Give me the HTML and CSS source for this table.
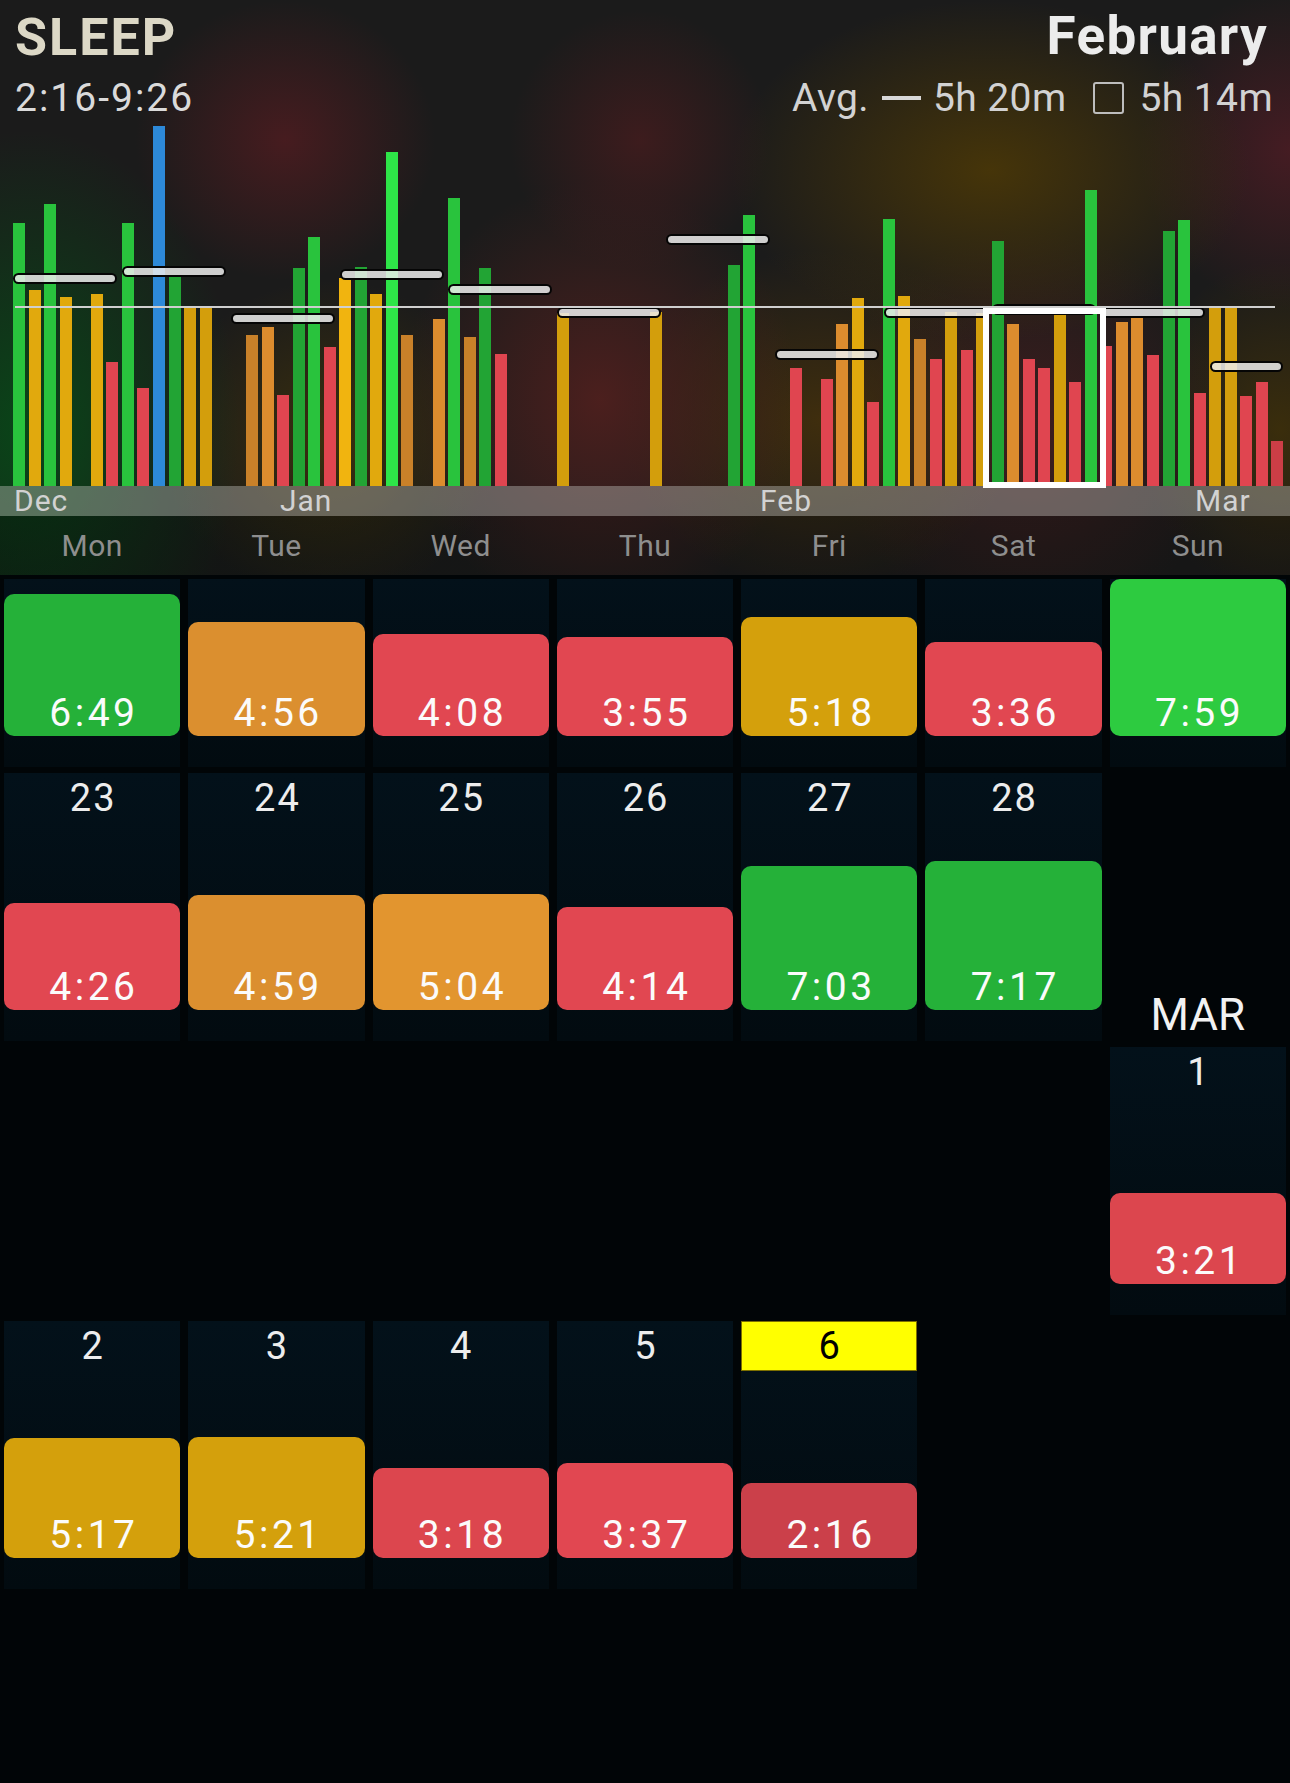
FILE: index.html
```html
<!DOCTYPE html>
<html lang="en">
<head>
<meta charset="utf-8">
<title>Sleep</title>
<link rel="stylesheet" href="styles.css">
</head>
<body>
<header class="top">
  <div class="titles">
    <div class="col-left">
      <div class="title">SLEEP</div>
      <div class="range">2:16-9:26</div>
    </div>
    <div class="col-right">
      <div class="month">February</div>
      <div class="avg"><span>Avg.</span><span class="dash"></span><span>5h 20m</span><span class="box"></span><span>5h 14m</span></div>
    </div>
  </div>

  <div class="chart">
    <i class="s"><b class="bar g" style="height:263px"></b></i>
    <i class="s"><b class="bar y" style="height:196px"></b></i>
    <i class="s"><b class="bar g" style="height:282px"></b></i>
    <i class="s"><b class="bar y" style="height:189px"></b></i>
    <i class="s"></i>
    <i class="s"><b class="bar y" style="height:192px"></b></i>
    <i class="s"><b class="bar r" style="height:124px"></b></i>
    <i class="s"><b class="bar g" style="height:263px"></b></i>
    <i class="s"><b class="bar r" style="height:98px"></b></i>
    <i class="s"><b class="bar bl" style="height:360px"></b></i>
    <i class="s"><b class="bar gd" style="height:209px"></b></i>
    <i class="s"><b class="bar yd" style="height:180px"></b></i>
    <i class="s"><b class="bar yd" style="height:180px"></b></i>
    <i class="s"></i>
    <i class="s"></i>
    <i class="s"><b class="bar od" style="height:151px"></b></i>
    <i class="s"><b class="bar o" style="height:159px"></b></i>
    <i class="s"><b class="bar r" style="height:91px"></b></i>
    <i class="s"><b class="bar gd" style="height:218px"></b></i>
    <i class="s"><b class="bar g" style="height:249px"></b></i>
    <i class="s"><b class="bar r" style="height:139px"></b></i>
    <i class="s"><b class="bar yb" style="height:208px"></b></i>
    <i class="s"><b class="bar gd" style="height:219px"></b></i>
    <i class="s"><b class="bar y" style="height:192px"></b></i>
    <i class="s"><b class="bar gb" style="height:334px"></b></i>
    <i class="s"><b class="bar od" style="height:151px"></b></i>
    <i class="s"></i>
    <i class="s"><b class="bar o" style="height:167px"></b></i>
    <i class="s"><b class="bar g" style="height:288px"></b></i>
    <i class="s"><b class="bar od" style="height:149px"></b></i>
    <i class="s"><b class="bar gd" style="height:218px"></b></i>
    <i class="s"><b class="bar r" style="height:132px"></b></i>
    <i class="s"></i>
    <i class="s"></i>
    <i class="s"></i>
    <i class="s"><b class="bar yd" style="height:173px"></b></i>
    <i class="s"></i>
    <i class="s"></i>
    <i class="s"></i>
    <i class="s"></i>
    <i class="s"></i>
    <i class="s"><b class="bar yd" style="height:174px"></b></i>
    <i class="s"></i>
    <i class="s"></i>
    <i class="s"></i>
    <i class="s"></i>
    <i class="s"><b class="bar gd" style="height:221px"></b></i>
    <i class="s"><b class="bar g" style="height:271px"></b></i>
    <i class="s"></i>
    <i class="s"></i>
    <i class="s"><b class="bar r" style="height:118px"></b></i>
    <i class="s"></i>
    <i class="s"><b class="bar r" style="height:107px"></b></i>
    <i class="s"><b class="bar o" style="height:162px"></b></i>
    <i class="s"><b class="bar y" style="height:188px"></b></i>
    <i class="s"><b class="bar r" style="height:84px"></b></i>
    <i class="s"><b class="bar g" style="height:267px"></b></i>
    <i class="s"><b class="bar y" style="height:190px"></b></i>
    <i class="s"><b class="bar od" style="height:147px"></b></i>
    <i class="s"><b class="bar r" style="height:127px"></b></i>
    <i class="s"><b class="bar yd" style="height:174px"></b></i>
    <i class="s"><b class="bar r" style="height:136px"></b></i>
    <i class="s"><b class="bar yd" style="height:173px"></b></i>
    <i class="s"><b class="bar gd" style="height:245px"></b></i>
    <i class="s"><b class="bar o" style="height:162px"></b></i>
    <i class="s"><b class="bar r" style="height:127px"></b></i>
    <i class="s"><b class="bar r" style="height:118px"></b></i>
    <i class="s"><b class="bar yd" style="height:174px"></b></i>
    <i class="s"><b class="bar r" style="height:104px"></b></i>
    <i class="s"><b class="bar g" style="height:296px"></b></i>
    <i class="s"><b class="bar r" style="height:140px"></b></i>
    <i class="s"><b class="bar o" style="height:164px"></b></i>
    <i class="s"><b class="bar o" style="height:168px"></b></i>
    <i class="s"><b class="bar r" style="height:131px"></b></i>
    <i class="s"><b class="bar gd" style="height:255px"></b></i>
    <i class="s"><b class="bar g" style="height:266px"></b></i>
    <i class="s"><b class="bar r" style="height:93px"></b></i>
    <i class="s"><b class="bar yd" style="height:178px"></b></i>
    <i class="s"><b class="bar yd" style="height:178px"></b></i>
    <i class="s"><b class="bar r" style="height:90px"></b></i>
    <i class="s"><b class="bar r" style="height:104px"></b></i>
    <i class="s"><b class="bar rd" style="height:45px"></b></i>

    <span class="pill" style="left:13px;top:152.5px"></span>
    <span class="pill" style="left:122px;top:145.5px"></span>
    <span class="pill" style="left:231px;top:192.5px"></span>
    <span class="pill" style="left:340px;top:148.5px"></span>
    <span class="pill" style="left:448px;top:163.5px"></span>
    <span class="pill" style="left:557px;top:186.5px"></span>
    <span class="pill" style="left:666px;top:113.5px"></span>
    <span class="pill" style="left:775px;top:228.5px"></span>
    <span class="pill" style="left:884px;top:186.5px"></span>
    <span class="pill" style="left:992px;top:183.5px"></span>
    <span class="pill" style="left:1101px;top:186.5px"></span>
    <span class="pill" style="left:1210px;top:240.5px;width:73px"></span>
    <span class="avg-line"></span>
    <span class="selected"></span>
  </div>

  <div class="months">
    <span class="mlabel" style="left:14px">Dec</span>
    <span class="mlabel" style="left:280px">Jan</span>
    <span class="mlabel" style="left:760px">Feb</span>
    <span class="mlabel" style="left:1195px">Mar</span>
  </div>

  <div class="weekdays">
    <span>Mon</span><span>Tue</span><span>Wed</span><span>Thu</span><span>Fri</span><span>Sat</span><span>Sun</span>
  </div>
</header>

<main class="cal">
  <!-- row 1 (scrolled under header) -->
  <div class="cell"><div class="blk cg" style="height:142px">6:49</div></div>
  <div class="cell"><div class="blk co" style="height:114px">4:56</div></div>
  <div class="cell"><div class="blk cr" style="height:102px">4:08</div></div>
  <div class="cell"><div class="blk cr" style="height:99px">3:55</div></div>
  <div class="cell"><div class="blk cy" style="height:119px">5:18</div></div>
  <div class="cell"><div class="blk cr" style="height:94px">3:36</div></div>
  <div class="cell"><div class="blk cgb" style="height:157px">7:59</div></div>

  <!-- row 2 -->
  <div class="cell"><div class="date">23</div><div class="blk cr" style="height:107px">4:26</div></div>
  <div class="cell"><div class="date">24</div><div class="blk co" style="height:115px">4:59</div></div>
  <div class="cell"><div class="date">25</div><div class="blk co2" style="height:116px">5:04</div></div>
  <div class="cell"><div class="date">26</div><div class="blk cr" style="height:103px">4:14</div></div>
  <div class="cell"><div class="date">27</div><div class="blk cg" style="height:144px">7:03</div></div>
  <div class="cell"><div class="date">28</div><div class="blk cg" style="height:149px">7:17</div></div>
  <div class="slot mar-slot"><div class="mar">MAR</div></div>

  <!-- row 3 -->
  <div class="slot"></div>
  <div class="slot"></div>
  <div class="slot"></div>
  <div class="slot"></div>
  <div class="slot"></div>
  <div class="slot"></div>
  <div class="cell"><div class="date">1</div><div class="blk cr2" style="height:91px">3:21</div></div>

  <!-- row 4 -->
  <div class="cell"><div class="date">2</div><div class="blk cy" style="height:120px">5:17</div></div>
  <div class="cell"><div class="date">3</div><div class="blk cy" style="height:121px">5:21</div></div>
  <div class="cell"><div class="date">4</div><div class="blk cr2" style="height:90px">3:18</div></div>
  <div class="cell"><div class="date">5</div><div class="blk cr" style="height:95px">3:37</div></div>
  <div class="cell"><div class="date today">6</div><div class="blk crd" style="height:75px">2:16</div></div>
  <div class="slot"></div>
  <div class="slot"></div>
</main>
</body>
</html>
```

FILE: styles.css
```css
* { box-sizing: border-box; }

html, body {
  margin: 0;
  padding: 0;
}

body {
  width: 1290px;
  height: 1783px;
  overflow: hidden;
  background: #010507;
  font-family: Roboto, "Liberation Sans", Arial, sans-serif;
  color: #e8e8e8;
}

/* ---------- header / chart ---------- */
.top {
  height: 575px;
  background:
    radial-gradient(ellipse 150px 140px at 285px 140px, rgba(78, 28, 32, 0.85), rgba(78, 28, 32, 0) 100%),
    radial-gradient(ellipse 130px 130px at 640px 140px, rgba(72, 28, 30, 0.75), rgba(72, 28, 30, 0) 100%),
    radial-gradient(ellipse 260px 170px at 990px 170px, rgba(72, 54, 8, 0.95), rgba(72, 54, 8, 0) 100%),
    radial-gradient(ellipse 150px 160px at 1290px 150px, rgba(76, 28, 36, 0.85), rgba(76, 28, 36, 0) 100%),
    radial-gradient(ellipse 210px 300px at 30px 430px, rgba(8, 72, 24, 0.95), rgba(8, 72, 24, 0) 100%),
    radial-gradient(ellipse 170px 160px at 330px 440px, rgba(66, 52, 10, 0.8), rgba(66, 52, 10, 0) 100%),
    radial-gradient(ellipse 200px 220px at 600px 400px, rgba(84, 32, 30, 0.85), rgba(84, 32, 30, 0) 100%),
    radial-gradient(ellipse 200px 170px at 820px 420px, rgba(72, 50, 10, 0.8), rgba(72, 50, 10, 0) 100%),
    radial-gradient(ellipse 200px 200px at 1030px 430px, rgba(70, 30, 30, 0.8), rgba(70, 30, 30, 0) 100%),
    radial-gradient(ellipse 140px 170px at 1280px 430px, rgba(66, 50, 8, 0.8), rgba(66, 50, 8, 0) 100%),
    #1b1b1b;
}

.titles {
  height: 120px;
  display: flex;
  justify-content: space-between;
  padding: 0 17px 0 15px;
}

.title {
  margin-top: 12px;
  font-size: 52px;
  line-height: 52px;
  font-weight: 700;
  color: #dcd8c6;
  letter-spacing: 2px;
}

.range {
  margin-top: 12px;
  font-size: 39px;
  line-height: 44px;
  letter-spacing: 2px;
  color: #dadada;
}

.col-right {
  display: flex;
  flex-direction: column;
  align-items: flex-end;
}

.month {
  margin-top: 10px;
  padding-right: 5px;
  font-size: 53px;
  line-height: 52px;
  font-weight: 700;
  letter-spacing: 1.3px;
  color: #ececec;
}

.avg {
  margin-top: 14px;
  height: 44px;
  display: flex;
  align-items: center;
  font-size: 39px;
  letter-spacing: 0.4px;
  color: #d2d2d2;
  white-space: pre;
}

.dash {
  width: 39px;
  height: 3.5px;
  margin: 0 12px 0 13px;
  background: #d8d8d8;
}

.box {
  width: 31px;
  height: 32px;
  margin: 0 15px 0 27px;
  border: 2px solid #bdbdbd;
  border-radius: 3px;
}

.chart {
  position: relative;
  z-index: 2;
  height: 366px;
  display: flex;
  align-items: flex-end;
  padding-left: 13.2px;
}

.s {
  flex: 0 0 15.54px;
  height: 100%;
  display: flex;
  align-items: flex-end;
}

.bar {
  display: block;
  width: 12px;
}

.g  { background: #29c33d; }
.gd { background: #22a434; }
.gb { background: #2ee548; }
.y  { background: #e1a90d; }
.yd { background: #d39e0c; }
.yb { background: #f1b40f; }
.o  { background: #dc8c2e; }
.od { background: #c98129; }
.r  { background: #e04550; }
.rd { background: #cc3e46; }
.bl { background: #2d89d8; }

.pill {
  position: absolute;
  width: 104px;
  height: 11px;
  border: 2.5px solid #050505;
  border-radius: 6px;
  background: rgba(236, 236, 236, 0.86);
}

.avg-line {
  position: absolute;
  left: 15px;
  top: 185.5px;
  width: 1260px;
  height: 2.5px;
  background: #cfcfcf;
}

.selected {
  position: absolute;
  left: 983px;
  top: 188px;
  width: 123px;
  height: 180px;
  border: 6px solid #ffffff;
}

.months {
  position: relative;
  height: 30px;
  background: rgba(190, 190, 185, 0.42);
}

.mlabel {
  position: absolute;
  top: 0;
  font-size: 30px;
  line-height: 30px;
  letter-spacing: 1px;
  color: #d2d2d2;
}

.weekdays {
  height: 59px;
  display: grid;
  grid-template-columns: repeat(7, 1fr);
  background: linear-gradient(90deg, rgba(0, 10, 4, 0.35), rgba(0, 0, 0, 0.18) 45%, rgba(0, 0, 0, 0.2));
}

.weekdays span {
  text-align: center;
  font-size: 30px;
  line-height: 59px;
  letter-spacing: 0.5px;
  color: #8e8e8e;
}

/* ---------- calendar ---------- */
.cal {
  display: grid;
  grid-template-columns: repeat(7, 1fr);
  grid-template-rows: 188px 268px 268px 268px;
  row-gap: 6px;
  padding-top: 4px;
}

.cell {
  margin: 0 4px;
  display: flex;
  flex-direction: column;
  background: linear-gradient(180deg, #03111a 0%, #020b10 100%);
}

.slot {
  margin: 0 4px;
}

.date {
  height: 50px;
  line-height: 50px;
  text-align: center;
  font-size: 38px;
  letter-spacing: 2px;
  padding-left: 2px;
  color: #ededed;
}

.date.today {
  background: #ffff00;
  color: #000;
  box-shadow: inset 0 0 0 1px #7d7000;
}

.blk {
  margin-top: auto;
  margin-bottom: 31px;
  border-radius: 10px;
  display: flex;
  align-items: flex-end;
  justify-content: center;
  padding-bottom: 3px;
  padding-left: 3.5px;
  font-size: 39px;
  line-height: 40px;
  letter-spacing: 3.5px;
  color: #fbfbfb;
}

.cg  { background: #25b139; }
.cgb { background: #2dcb40; }
.co  { background: #db8f2f; }
.co2 { background: #e2952f; }
.cr  { background: #e14751; }
.cr2 { background: #dc464e; }
.cy  { background: #d4a00c; }
.crd { background: #cb404a; }

.mar-slot {
  display: flex;
  align-items: flex-end;
  justify-content: center;
  padding-bottom: 4px;
}

.mar {
  font-size: 44px;
  line-height: 44px;
  color: #f2f2f2;
}
```
